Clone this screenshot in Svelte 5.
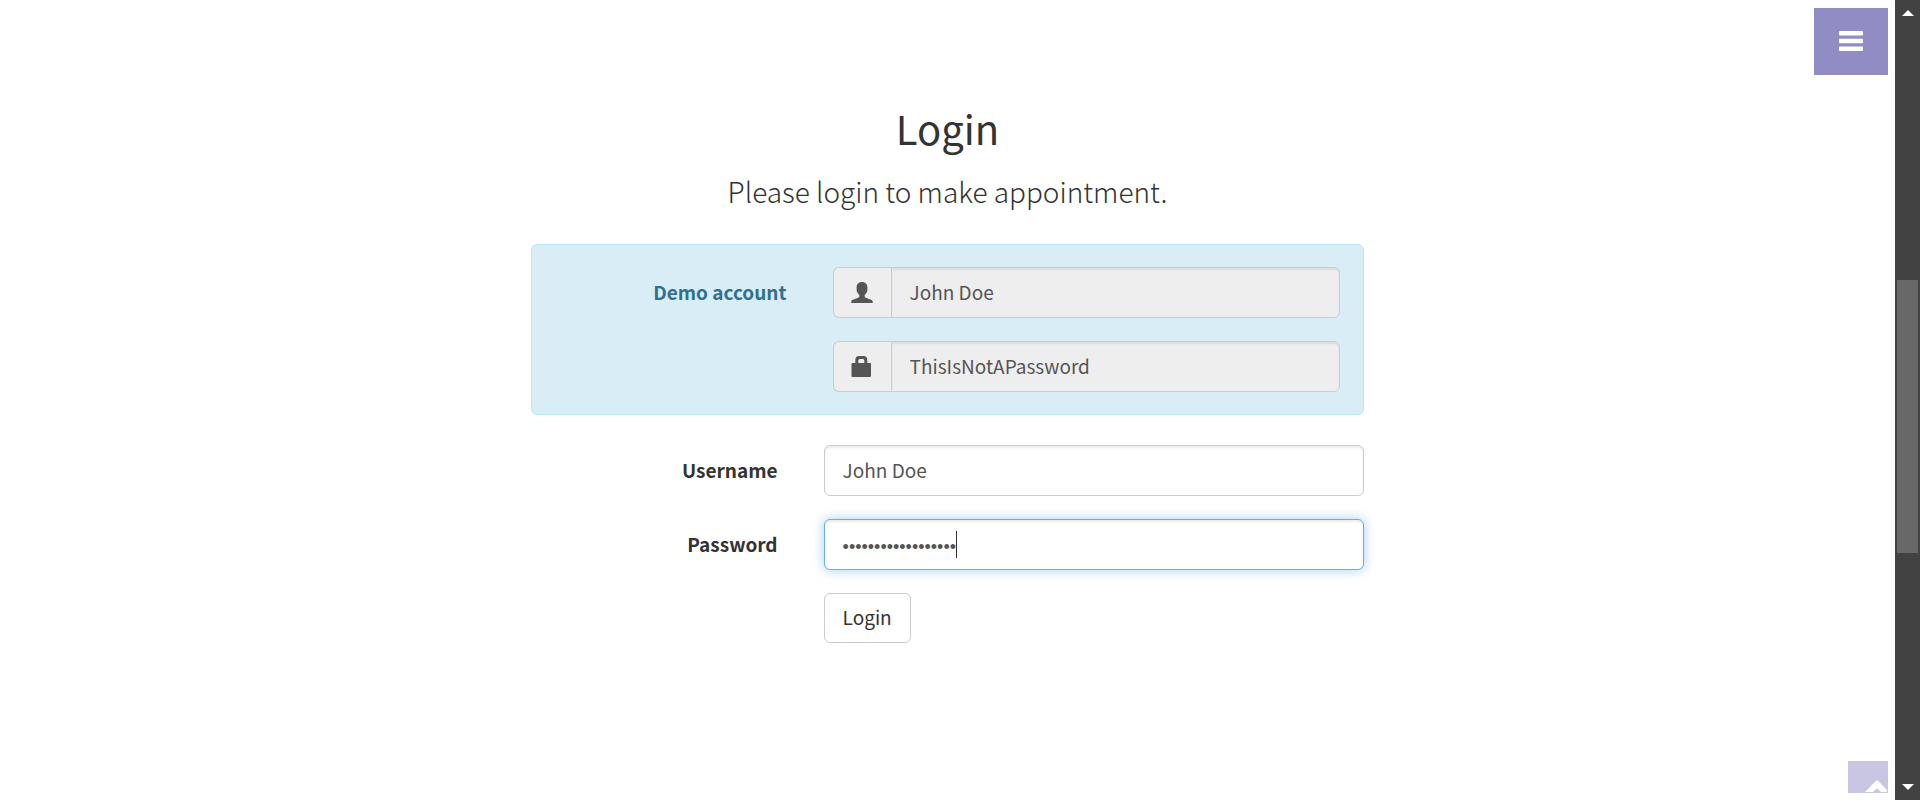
<script>
  import { onMount } from 'svelte';

  const demo = { username: 'John Doe', password: 'ThisIsNotAPassword' };
  let username = $state(demo.username);
  let password = $state(demo.password);
  let focused = $state(false);
  let passwordBox;

  onMount(() => {
    passwordBox.focus();
    passwordBox.setSelectionRange(password.length, password.length);
  });
</script>

<div class="page">
  <main>
    <h2>Login</h2>
    <p class="lead">Please login to make appointment.</p>

    <form onsubmit={(event) => event.preventDefault()}>
      <div class="demo">
        <div class="row">
          <label for="demo-username">Demo account</label>
          <div class="group">
            <span class="addon">
              <svg width="22" height="21" viewBox="0 0 22 21" aria-hidden="true">
                <path d="M11 0C14.2 0 16.4 2.1 16.4 5.3V7.8C16.4 9.8 15.3 11.6 13.7 13V14.6C13.7 15 13.9 15.2 14.3 15.4L20.6 18.1C21.5 18.6 21.8 19.1 21.8 21H.2C.2 19.1.5 18.6 1.4 18.1L7.7 15.4C8.1 15.2 8.3 15 8.3 14.6V13C6.7 11.6 5.6 9.8 5.6 7.8V5.3C5.6 2.1 7.8 0 11 0Z" />
              </svg>
            </span>
            <input id="demo-username" type="text" value={demo.username} readonly />
          </div>
        </div>
        <div class="row">
          <span></span>
          <div class="group">
            <span class="addon">
              <svg width="22" height="21" viewBox="0 0 22 21" aria-hidden="true">
                <path fill-rule="evenodd" d="M4.3 7V4.2Q4.3 0 8.2 0H12.4Q16.3 0 16.3 4.2V7H19Q20 7 20 8V20Q20 21 19 21H1.5Q.5 21 .5 20V8Q.5 7 1.5 7ZM7.3 7H13.3V4.6Q13.3 3 11.8 3H8.8Q7.3 3 7.3 4.6Z" />
              </svg>
            </span>
            <input type="text" aria-label="Demo password" value={demo.password} readonly />
          </div>
        </div>
      </div>

      <div class="row">
        <label for="username">Username</label>
        <input id="username" type="text" bind:value={username} />
      </div>
      <div class="row">
        <label for="password">Password</label>
        <div class="secret">
          <input
            id="password"
            type="password"
            bind:value={password}
            bind:this={passwordBox}
            onfocus={() => (focused = true)}
            onblur={() => (focused = false)}
          />
          {#if focused}
            <span class="caret" style:--count={password.length}></span>
          {/if}
        </div>
      </div>
      <div class="row">
        <span></span>
        <button class="submit" type="submit">Login</button>
      </div>
    </form>
  </main>

  <div class="scrollbar" aria-hidden="true">
    <svg width="12" height="6" viewBox="0 0 12 6"><path d="M6 0L12 6H0Z" /></svg>
    <div class="track"><div class="thumb"></div></div>
    <svg width="12" height="6" viewBox="0 0 12 6"><path d="M0 0H12L6 6Z" /></svg>
  </div>
</div>

<button class="menu" type="button" aria-label="Menu">
  <svg width="24" height="20" viewBox="0 0 24 20" aria-hidden="true">
    <rect width="24" height="4.5" rx=".8" />
    <rect y="7.8" width="24" height="4.5" rx=".8" />
    <rect y="15.5" width="24" height="4.5" rx=".8" />
  </svg>
</button>

<a class="to-top" href="#top" aria-label="Back to top">
  <svg width="24" height="13" viewBox="0 0 24 13" aria-hidden="true">
    <path d="M1 12L12.2 .8Q13 0 13.8 .8L23 10V12H17L13 8.2L9 12Z" />
  </svg>
</a>

<style>
  :global(body) {
    background: #fff;
  }

  .page,
  .menu,
  .to-top {
    box-sizing: border-box;
    font-family: 'Noto Sans CJK SC', 'Open Sans', sans-serif;
    color: #333;
  }

  .page {
    display: flex;
    height: 100vh;
    overflow: hidden;
    font-size: 19px;
    line-height: 30px;
  }

  main {
    flex: 1;
    padding: 98px 24px 0;
  }

  h2,
  .lead {
    margin: 0;
    text-align: center;
  }

  h2 {
    font-size: 40px;
    font-weight: 400;
    line-height: 60px;
  }

  .lead {
    margin-top: 9px;
    font-size: 28px;
    font-weight: 200;
    line-height: 48px;
  }

  form {
    display: flex;
    flex-direction: column;
    gap: 23px;
    max-width: 833px;
    margin: 29px auto 0;
  }

  .demo {
    display: flex;
    flex-direction: column;
    gap: 23px;
    padding: 22px 23px;
    margin-bottom: 7px;
    border: 1px solid #bce8f1;
    border-radius: 6px;
    background: #d9edf7;
    color: #31708f;
  }

  .row {
    display: grid;
    grid-template-columns: minmax(0, 47fr) minmax(0, 103fr);
    column-gap: 46px;
    align-items: center;
  }

  label {
    padding-bottom: 2px;
    font-weight: 700;
    text-align: right;
  }

  .group {
    display: flex;
  }

  .addon {
    display: flex;
    flex: none;
    align-items: center;
    justify-content: center;
    width: 57px;
    border: 1px solid #ccc;
    border-right: 0;
    border-radius: 6px 0 0 6px;
    background: #eee;
  }

  .addon svg {
    fill: #555;
  }

  input {
    box-sizing: border-box;
    width: 100%;
    min-width: 0;
    height: 51px;
    padding: 8px 18px 10px;
    border: 1px solid #ccc;
    border-radius: 6px;
    outline: 0;
    background: #fff;
    box-shadow: inset 0 2px 2px rgba(0, 0, 0, 0.075);
    color: #555;
    font: inherit;
  }

  .group input {
    flex: 1;
    border-radius: 0 6px 6px 0;
    background: #eee;
  }

  .secret {
    position: relative;
    display: flex;
  }

  .secret input {
    padding: 12px 18px 6px;
    caret-color: transparent;
    font-family: 'Liberation Sans', sans-serif;
    font-size: 18px;
  }

  /* Each password dot is 0.35em wide in the field's font. */
  .caret {
    position: absolute;
    top: 12px;
    left: calc(19px + var(--count) * 0.35em);
    width: 1px;
    height: 27px;
    background: #333;
    font-size: 18px;
    pointer-events: none;
  }

  input:focus {
    border-color: #66afe9;
    box-shadow:
      inset 0 2px 2px rgba(0, 0, 0, 0.075),
      0 0 12px rgba(102, 175, 233, 0.6);
  }

  .submit {
    justify-self: start;
    height: 50px;
    padding: 0 18px 2px;
    border: 1px solid #ccc;
    border-radius: 6px;
    background: #fff;
    color: #333;
    font: inherit;
  }

  .scrollbar {
    box-sizing: border-box;
    display: flex;
    flex: none;
    flex-direction: column;
    align-items: center;
    width: 25px;
    padding: 10px 2px;
    background: #424242;
  }

  .scrollbar svg {
    flex: none;
    fill: #fff;
  }

  .track {
    flex: 1;
    width: 100%;
    padding-top: 264px;
  }

  .thumb {
    height: 273px;
    background: #686868;
  }

  .menu {
    position: fixed;
    top: 8px;
    right: 32px;
    display: flex;
    align-items: center;
    justify-content: center;
    width: 74px;
    height: 67px;
    padding: 0 0 1px;
    border: 0;
    background: #918dc4;
  }

  .menu svg,
  .to-top svg {
    fill: #fff;
  }

  .to-top {
    position: fixed;
    right: 32px;
    bottom: 7px;
    display: flex;
    align-items: flex-end;
    justify-content: flex-end;
    width: 40px;
    height: 32px;
    background: #c8c6e2;
  }
</style>
